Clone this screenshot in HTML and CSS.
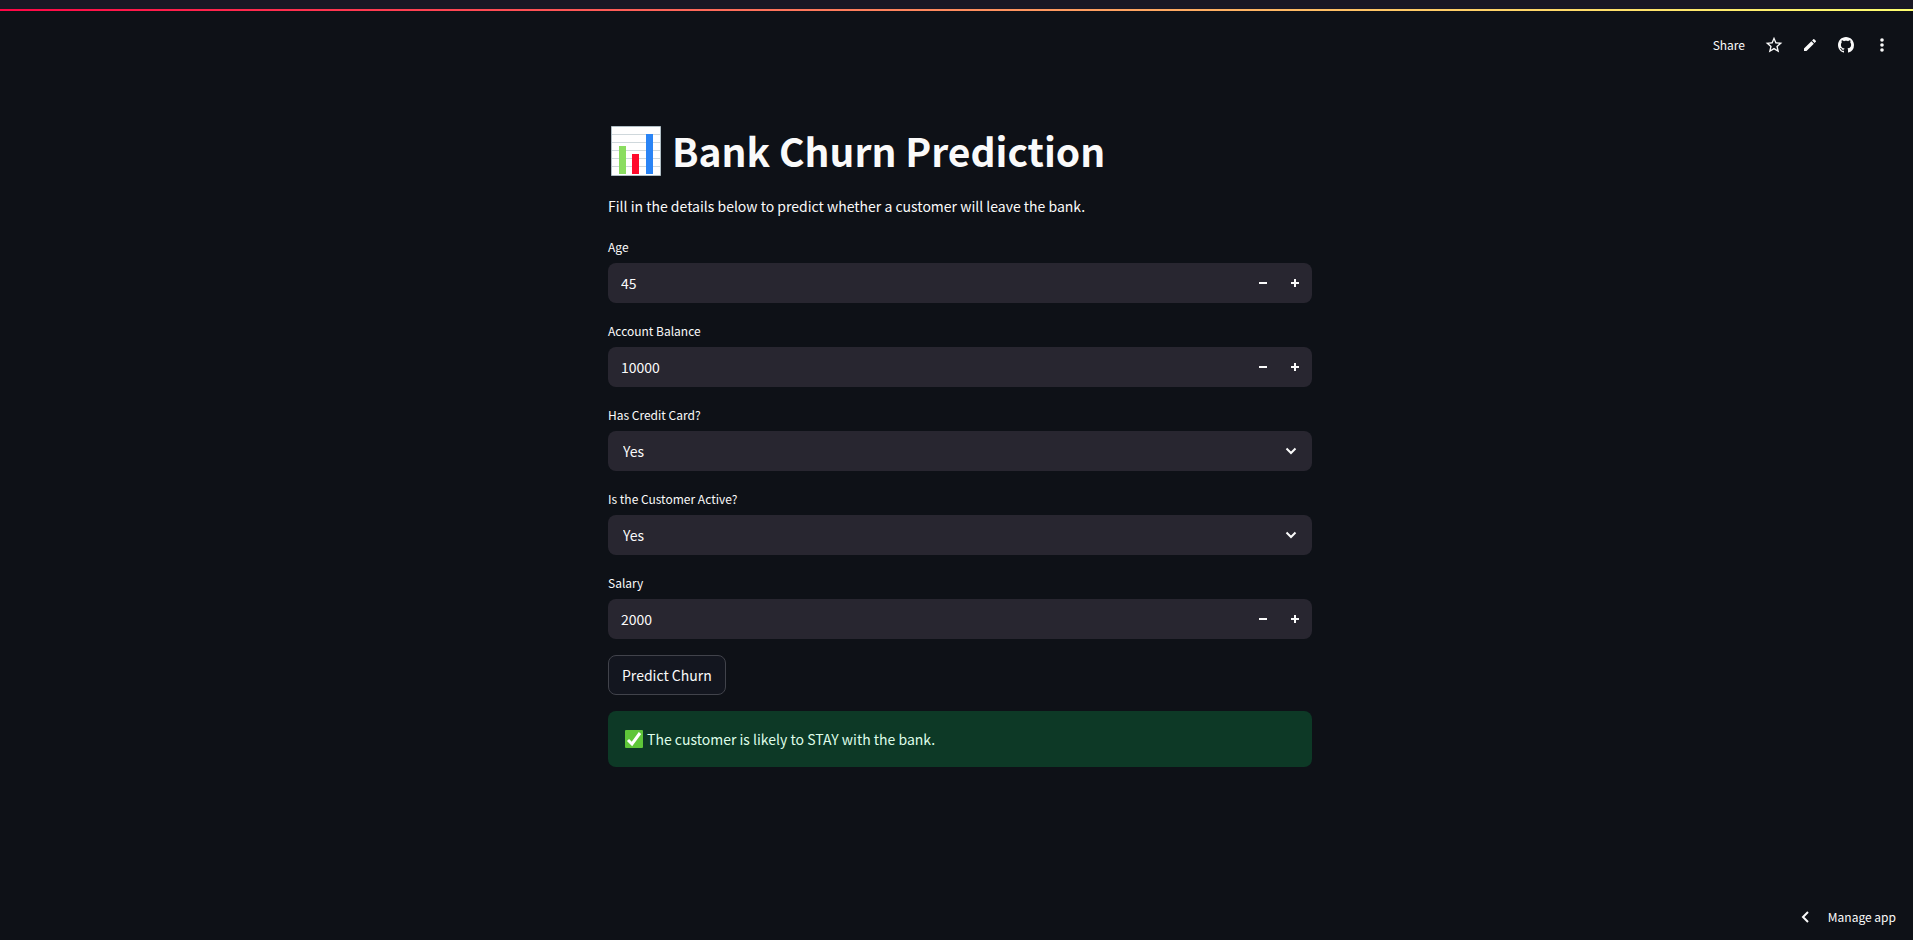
FILE: index.html
```
<!DOCTYPE html>
<html lang="en">
  <head>
    <meta charset="UTF-8" />
    <meta name="viewport" content="width=device-width, initial-scale=1" />
    <title>Bank Churn Prediction</title>
    <link rel="stylesheet" href="styles.css" />
  </head>
  <body>
    <div class="decoration"></div>
    <header class="toolbar">
      <button type="button" class="share">Share</button>
      <button type="button" class="icon-btn" aria-label="Favorite">
        <svg viewBox="0 0 24 24" width="20" height="20"><path fill="currentColor" d="M22 9.24l-7.19-.62L12 2 9.19 8.63 2 9.24l5.46 4.73L5.82 21 12 17.27 18.18 21l-1.63-7.03L22 9.24zM12 15.4l-3.76 2.27 1-4.28-3.32-2.88 4.38-.38L12 6.1l1.71 4.04 4.38.38-3.32 2.88 1 4.28L12 15.4z" /></svg>
      </button>
      <button type="button" class="icon-btn" aria-label="Edit">
        <svg viewBox="0 0 24 24" width="16" height="16"><path fill="currentColor" d="M3 17.25V21h3.75L17.81 9.94l-3.75-3.75L3 17.25zM20.71 7.04a1 1 0 0 0 0-1.41l-2.34-2.34a1 1 0 0 0-1.41 0l-1.83 1.83 3.75 3.75 1.83-1.83z" /></svg>
      </button>
      <button type="button" class="icon-btn" aria-label="View source on GitHub">
        <svg viewBox="0 0 16 16" width="16" height="16"><path fill="currentColor" d="M8 0C3.58 0 0 3.58 0 8c0 3.54 2.29 6.53 5.47 7.59.4.07.55-.17.55-.38 0-.19-.01-.82-.01-1.49-2.01.37-2.53-.49-2.69-.94-.09-.23-.48-.94-.82-1.13-.28-.15-.68-.52-.01-.53.63-.01 1.08.58 1.23.82.72 1.21 1.87.87 2.33.66.07-.52.28-.87.51-1.07-1.78-.2-3.64-.89-3.64-3.95 0-.87.31-1.59.82-2.15-.08-.2-.36-1.02.08-2.12 0 0 .67-.21 2.2.82.64-.18 1.32-.27 2-.27s1.36.09 2 .27c1.53-1.04 2.2-.82 2.2-.82.44 1.1.16 1.92.08 2.12.51.56.82 1.27.82 2.15 0 3.07-1.87 3.75-3.65 3.95.29.25.54.73.54 1.48 0 1.07-.01 1.93-.01 2.2 0 .21.15.46.55.38A8.01 8.01 0 0 0 16 8c0-4.42-3.58-8-8-8z" /></svg>
      </button>
      <button type="button" class="icon-btn" aria-label="Main menu">
        <svg viewBox="0 0 16 16" width="16" height="16" fill="currentColor"><circle cx="8" cy="3" r="1.800" /><circle cx="8" cy="8" r="1.800" /><circle cx="8" cy="13" r="1.800" /></svg>
      </button>
    </header>

    <main class="main">
      <form class="block">
        <h1 class="title">
          <svg class="title-icon" viewBox="0 0 50 50" role="img" aria-label="Bar chart">
            <path fill="#fff" stroke="#b0bec5" d="M.5.5h49v49H.5z" />
            <path stroke="#cfd8dc" d="M1 8.500h48M1 16.500h48M1 24.500h48M1 32.500h48M1 40.500h48" />
            <path fill="#8add60" d="M8 20h7v28H8z" />
            <path fill="#ff0a2c" d="M21 28h7v20h-7z" />
            <path fill="#2a84f5" d="M35 8h7v40h-7z" />
          </svg>
          <span>Bank Churn Prediction</span>
        </h1>
        <p class="intro">Fill in the details below to predict whether a customer will leave the bank.</p>

        <div class="field">
          <label for="age">Age</label>
          <div class="control">
            <input id="age" type="number" value="45" />
            <button type="button" class="step" aria-label="Decrease age"><svg viewBox="0 0 8 8" width="8" height="8"><path d="M0 4h8" /></svg></button>
            <button type="button" class="step" aria-label="Increase age"><svg viewBox="0 0 8 8" width="8" height="8"><path d="M0 4h8M4 0v8" /></svg></button>
          </div>
        </div>

        <div class="field">
          <label for="balance">Account Balance</label>
          <div class="control">
            <input id="balance" type="number" value="10000" />
            <button type="button" class="step" aria-label="Decrease balance"><svg viewBox="0 0 8 8" width="8" height="8"><path d="M0 4h8" /></svg></button>
            <button type="button" class="step" aria-label="Increase balance"><svg viewBox="0 0 8 8" width="8" height="8"><path d="M0 4h8M4 0v8" /></svg></button>
          </div>
        </div>

        <div class="field">
          <label for="card">Has Credit Card?</label>
          <div class="control">
            <select id="card">
              <option selected>Yes</option>
              <option>No</option>
            </select>
            <svg class="chevron" viewBox="0 0 12 8" width="12" height="8"><path d="M1.500 1.500L6 6l4.500-4.500" /></svg>
          </div>
        </div>

        <div class="field">
          <label for="active">Is the Customer Active?</label>
          <div class="control">
            <select id="active">
              <option selected>Yes</option>
              <option>No</option>
            </select>
            <svg class="chevron" viewBox="0 0 12 8" width="12" height="8"><path d="M1.500 1.500L6 6l4.500-4.500" /></svg>
          </div>
        </div>

        <div class="field">
          <label for="salary">Salary</label>
          <div class="control">
            <input id="salary" type="number" value="2000" />
            <button type="button" class="step" aria-label="Decrease salary"><svg viewBox="0 0 8 8" width="8" height="8"><path d="M0 4h8" /></svg></button>
            <button type="button" class="step" aria-label="Increase salary"><svg viewBox="0 0 8 8" width="8" height="8"><path d="M0 4h8M4 0v8" /></svg></button>
          </div>
        </div>

        <button type="button" class="submit">Predict Churn</button>

        <div class="alert" role="alert">
          <svg class="check" viewBox="0 0 18 18" width="18" height="18">
            <rect width="18" height="18" rx="1" fill="#5ec639" />
            <path d="M3 10l4 4 8-11" fill="none" stroke="#fff" stroke-width="3" />
          </svg>
          <span>The customer is likely to STAY with the bank.</span>
        </div>
      </form>
    </main>

    <footer class="footer">
      <button type="button" class="manage">
        <svg viewBox="0 0 8 12" width="8" height="12"><path d="M7 1L2 6l5 5" /></svg>
        <span>Manage app</span>
      </button>
    </footer>
  </body>
</html>
```
FILE: styles.css
```
* {
  box-sizing: border-box;
  margin: 0;
  padding: 0;
}
body {
  display: flex;
  flex-direction: column;
  min-height: 100vh;
  background: #0e1117;
  color: #fafafa;
  font-family: 'Noto Sans CJK SC', sans-serif;
  font-size: 14px;
  line-height: 24px;
}
button,
input,
select {
  border: 0;
  background: none;
  color: inherit;
  font: inherit;
}
button,
select {
  cursor: pointer;
}
svg {
  display: block;
  flex: none;
}
.decoration {
  height: 11px;
  background: linear-gradient(90deg, #ff0546, #ff6a5a 37%, #ffc866 73%, #ffff70) bottom / 100% 2px no-repeat, #191724;
}
.toolbar {
  display: flex;
  align-items: center;
  justify-content: flex-end;
  height: 68px;
  padding-right: 13px;
}
.share {
  padding: 0 11px;
  font-size: 12px;
}
.icon-btn {
  display: flex;
  align-items: center;
  justify-content: center;
  width: 36px;
  height: 32px;
}
.main {
  flex: 1;
  padding: 45px 0 48px 7px;
}
.block {
  display: flex;
  flex-direction: column;
  gap: 16px;
  max-width: 704px;
  margin: 0 auto;
}
.title {
  display: flex;
  align-items: center;
  gap: 11px;
  padding-left: 3px;
  font-size: 39px;
  font-weight: 700;
  line-height: 53px;
}
.title-icon {
  width: 50px;
  height: 50px;
}
.intro {
  line-height: 26px;
}
.field {
  display: flex;
  flex-direction: column;
  gap: 4px;
}
.field label {
  font-size: 12px;
}
.control {
  position: relative;
  display: flex;
  height: 40px;
  padding-right: 1px;
  border-radius: 8px;
  background: #282630;
  overflow: hidden;
}
.control input,
.control select {
  flex: 1;
  min-width: 0;
  padding: 0 13px;
  outline: 0;
  appearance: none;
}
.control select {
  padding: 0 15px;
}
.control input {
  appearance: textfield;
}
.control input::-webkit-inner-spin-button {
  display: none;
}
.step {
  display: flex;
  align-items: center;
  justify-content: center;
  width: 32px;
}
.step path,
.chevron path,
.manage path {
  fill: none;
  stroke: currentColor;
  stroke-width: 2;
}
.chevron {
  position: absolute;
  top: 16px;
  right: 15px;
  pointer-events: none;
}
.submit {
  align-self: flex-start;
  height: 40px;
  padding: 0 13px;
  border: 1px solid #41434b;
  border-radius: 8px;
  background: #13161f;
}
.alert {
  display: flex;
  align-items: center;
  gap: 4px;
  padding: 16px 17px;
  border-radius: 8px;
  background: #0d3926;
  color: #dffde9;
}
.footer {
  display: flex;
  justify-content: flex-end;
  padding: 0 17px 11px;
}
.manage {
  display: flex;
  align-items: center;
  gap: 19px;
  font-size: 12px;
}
```
